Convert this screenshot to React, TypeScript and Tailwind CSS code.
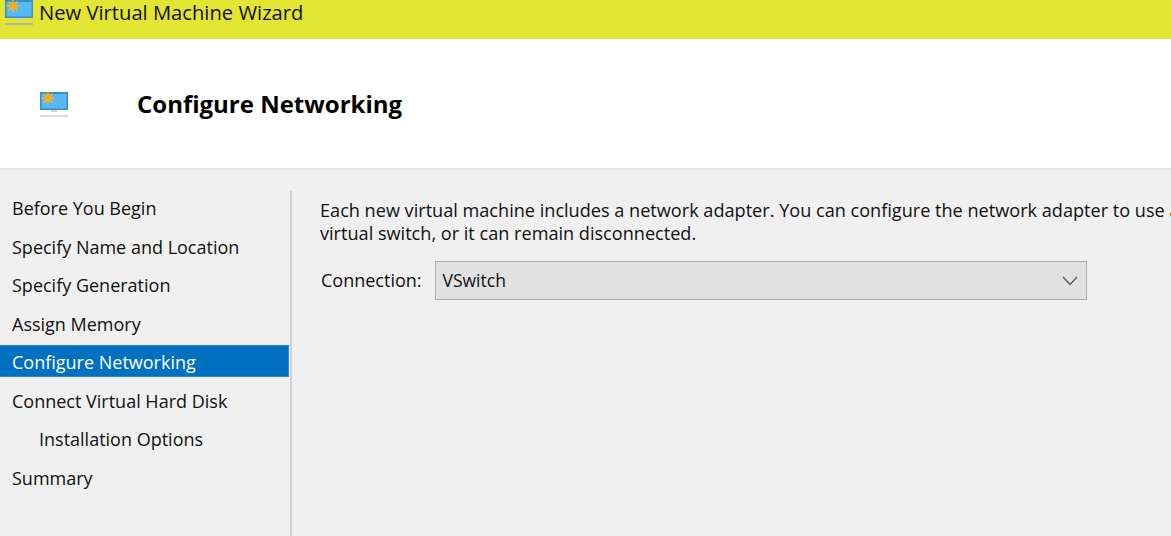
const steps = [
  { label: 'Before You Begin' },
  { label: 'Specify Name and Location' },
  { label: 'Specify Generation' },
  { label: 'Assign Memory' },
  { label: 'Configure Networking', active: true },
  { label: 'Connect Virtual Hard Disk' },
  { label: 'Installation Options', indent: true },
  { label: 'Summary' },
];

function MachineIcon({ viewBox, baseColor, className }: { viewBox: string; baseColor: string; className: string }) {
  return (
    <svg viewBox={viewBox} className={className}>
      <rect x="0" y="1" width="28" height="18" fill="#3a8dc2" />
      <rect x="1.5" y="3" width="25" height="14.5" fill="#56b9f4" />
      <rect x="11" y="19" width="6" height="2" fill="#c9d3da" />
      <rect x="0" y="24" width="28" height="2" fill={baseColor} />
      <g stroke="#f0bb4a" strokeWidth="1.3">
        <line x1="8" y1="0.5" x2="8" y2="13.5" />
        <line x1="1.5" y1="7" x2="14.5" y2="7" />
        <line x1="3.5" y1="2.5" x2="12.5" y2="11.5" />
        <line x1="12.5" y1="2.5" x2="3.5" y2="11.5" />
      </g>
      <circle cx="8" cy="7" r="4" fill="#f7ae1c" />
    </svg>
  );
}

export default function App() {
  return (
    <div className="h-[536px] w-[1171px] overflow-hidden bg-[#f0f0f0] text-[#111] font-['Open_Sans','Noto_Sans',sans-serif]">
      <div className="flex h-[39px] items-start bg-[#e2e532] pl-[5px]">
        <MachineIcon viewBox="0 1 28 25" baseColor="#aeb4b0" className="h-[25px] w-[28px]" />
        <span className="ml-[6px] text-[20.2px] leading-[25px] whitespace-nowrap">New Virtual Machine Wizard</span>
      </div>

      <div className="flex h-[131px] items-center border-b-2 border-[#e3e3e3] bg-white pl-[40px]">
        <MachineIcon viewBox="0 0 28 26" baseColor="#d8dcdc" className="mt-[1px] h-[26px] w-[28px]" />
        <h1 className="ml-[69px] mt-[1px] text-[24px] leading-[30px] font-bold text-black">Configure Networking</h1>
      </div>

      <div className="flex pt-[21px]">
        <ul className="h-[345px] w-[292px] shrink-0 border-r-2 border-[#d0d0d0] pr-[1px]">
          {steps.map((step) => (
            <li key={step.label} className="h-[38.5px]">
              <div
                className={`flex h-[32px] items-center pt-[2px] text-[18px] leading-[26px] whitespace-nowrap ${step.indent ? 'pl-[39px]' : 'pl-[12px]'} ${step.active ? 'border-y border-r border-[#2a87c9] bg-[#0070c0] text-white' : ''}`}
              >
                {step.label}
              </div>
            </li>
          ))}
        </ul>

        <div className="min-w-0 flex-1 pl-[28px] pt-[8px]">
          <p className="text-[18.13px] leading-[23px] whitespace-nowrap">
            Each new virtual machine includes a network adapter. You can configure the network adapter to use a
            <br />
            virtual switch, or it can remain disconnected.
          </p>
          <div className="mt-[16px] flex items-center">
            <span className="ml-[1px] text-[18px]">Connection:</span>
            <div className="ml-[13px] flex h-[39px] w-[652px] items-center justify-between border border-[#adadad] bg-[#e1e1e1] pl-[7px] pr-[8px] text-[17.5px]">
              <span>VSwitch</span>
              <svg viewBox="0 0 16 10" className="h-[10px] w-[16px]" fill="none" stroke="#555" strokeWidth="1.3">
                <path d="M1 1 L8 8.5 L15 1" />
              </svg>
            </div>
          </div>
        </div>
      </div>
    </div>
  );
}
